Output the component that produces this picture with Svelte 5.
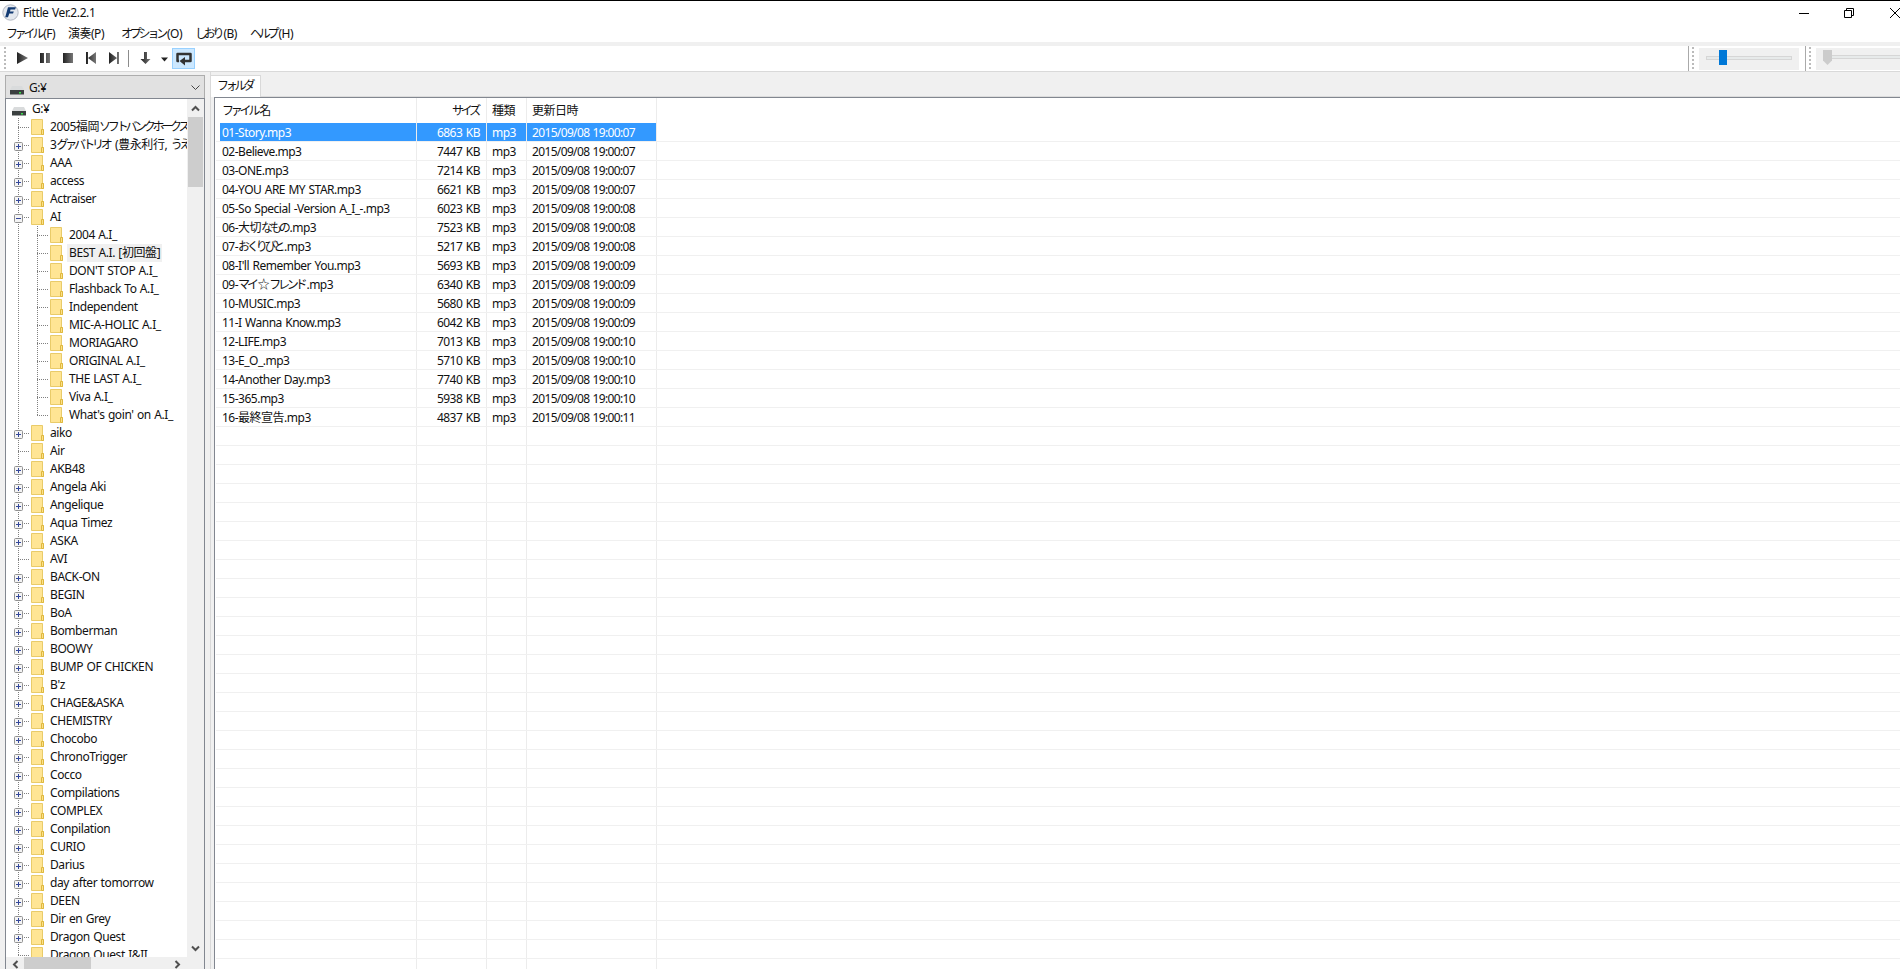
<script>
    /** Main window of the player: menu, transport bar, folder tree, file list. */

    const menus = [
        { kana: 'ファイル', key: '(F)', width: 62 },
        { kana: '演奏', key: '(P)', width: 53 },
        { kana: 'オプション', key: '(O)', width: 74 },
        { kana: 'しおり', key: '(B)', width: 55 },
        { kana: 'ヘルプ', key: '(H)', width: 60 },
    ];

    const albums = [
        '2004 A.I_',
        'BEST A.I. [初回盤]',
        "DON'T STOP A.I_",
        'Flashback To A.I_',
        'Independent',
        'MIC-A-HOLIC A.I_',
        'MORIAGARO',
        'ORIGINAL A.I_',
        'THE LAST A.I_',
        'Viva A.I_',
        "What's goin' on A.I_",
    ];

    const artists = [
        '2005福岡ソフトバンクホークス', '3グァバトリオ (豊永利行, うえだ', 'AAA', 'access', 'Actraiser', 'AI',
        'aiko', 'Air', 'AKB48', 'Angela Aki', 'Angelique', 'Aqua Timez', 'ASKA', 'AVI', 'BACK-ON', 'BEGIN',
        'BoA', 'Bomberman', 'BOOWY', 'BUMP OF CHICKEN', "B'z", 'CHAGE&ASKA', 'CHEMISTRY', 'Chocobo',
        'ChronoTrigger', 'Cocco', 'Compilations', 'COMPLEX', 'Conpilation', 'CURIO', 'Darius',
        'day after tomorrow', 'DEEN', 'Dir en Grey', 'Dragon Quest', 'Dragon Quest I&II',
    ];

    // Folders without subfolders have no expander box
    const leaves = ['2005福岡ソフトバンクホークス', 'Air', 'AVI', 'Dragon Quest I&II'];

    const tree = artists.flatMap((name) => [
        { name, depth: 0, box: leaves.includes(name) ? '' : name === 'AI' ? 'minus' : 'plus' },
        ...(name === 'AI' ? albums.map((a, i) => ({ name: a, depth: 1, box: '', last: i === albums.length - 1 })) : []),
    ]);

    const files = [
        ['01-Story.mp3', 6863, '07'],
        ['02-Believe.mp3', 7447, '07'],
        ['03-ONE.mp3', 7214, '07'],
        ['04-YOU ARE MY STAR.mp3', 6621, '07'],
        ['05-So Special -Version A_I_-.mp3', 6023, '08'],
        ['06-大切なもの.mp3', 7523, '08'],
        ['07-おくりびと.mp3', 5217, '08'],
        ["08-I'll Remember You.mp3", 5693, '09'],
        ['09-マイ☆フレンド.mp3', 6340, '09'],
        ['10-MUSIC.mp3', 5680, '09'],
        ['11-I Wanna Know.mp3', 6042, '09'],
        ['12-LIFE.mp3', 7013, '10'],
        ['13-E_O_.mp3', 5710, '10'],
        ['14-Another Day.mp3', 7740, '10'],
        ['15-365.mp3', 5938, '10'],
        ['16-最終宣告.mp3', 4837, '11'],
    ];
    const blankRows = Array(29);

    let selectedFile = $state(0);
    let selectedFolder = $state('BEST A.I. [初回盤]');

    // Kana runs are set tighter than the rest of the text
    function runs(text) {
        return text.split(/([\u3040-\u30ff]+)/).filter(Boolean);
    }
    const isKana = (run) => /^[\u3040-\u30ff]/.test(run);
</script>

{#snippet label(text)}
    {#each runs(text) as run}<span class:kana={isKana(run)}>{run}</span>{/each}
{/snippet}

{#snippet drive()}
    <svg class="drive" width="14" height="9" viewBox="0 0 14 9" aria-hidden="true">
        <path d="M2 0h10l2 4H0z" fill="#d9dbdc" />
        <path d="M0 4h14v4.500H0z" fill="#3b4040" />
        <path d="M9 6h2v1.500H9z" fill="#39e04a" />
    </svg>
{/snippet}

<div class="window">
    <header class="titlebar">
        <svg width="17" height="17" viewBox="0 0 17 17" aria-hidden="true">
            <circle cx="8.500" cy="8.500" r="7.700" fill="#e4e8ee" stroke="#b3b8c2" />
            <path d="M6 3.200h8l-1 2.300H8.500L8 7.400h3.800L11 9.500H7.300L6 13.300H3.200z" fill="#123a73" />
        </svg>
        <h1>Fittle Ver.2.2.1</h1>
        <div class="controls">
            <svg width="10" height="12" viewBox="0 0 10 12"><path d="M0 6.500h10" /></svg>
            <svg width="11" height="12" viewBox="0 0 11 12"><path d="M.5 3.500h7v7h-7zM2.500 3.500v-2h7v7h-2" /></svg>
            <svg width="10" height="12" viewBox="0 0 10 12"><path d="m0 1 10 10M10 1 0 11" /></svg>
        </div>
    </header>

    <nav class="menubar">
        {#each menus as menu}
            <span style:width="{menu.width}px"><span class:kana={isKana(menu.kana)}>{menu.kana}</span>{menu.key}</span>
        {/each}
    </nav>

    <div class="toolbar">
        <div class="band transport">
            <i class="grip"></i>
            <svg class="tools" width="190" height="22" viewBox="0 0 190 22" aria-hidden="true">
                <defs>
                    <linearGradient id="ink"><stop stop-color="#222" /><stop offset="1" stop-color="#777" /></linearGradient>
                </defs>
                <g fill="url(#ink)" transform="translate(0 -1)">
                    <path d="M12 5v12l11-6z" />
                    <path d="M35 6h4v10h-4zM41 6h4v10h-4z" />
                    <path d="M58 6h10v10H58z" />
                    <path d="M81 5h2v12h-2zM91 5v12l-8-6z" />
                    <path d="M104 5v12l8-6zM112 5h2v12h-2z" />
                    <path d="M139 5h3v7h3.500l-5 5-5-5h3.500z" />
                </g>
                <path d="M123.500 2v17" stroke="#8c8c8c" />
                <path d="M156 9.500h7l-3.500 4z" fill="#222" />
                <rect x="167.500" y=".5" width="22" height="20" fill="#cce8ff" stroke="#99d1ff" />
                <path d="M174 13h-1.500V6h13v7H180" fill="none" stroke="#333" stroke-width="2.500" stroke-linejoin="round" />
                <path d="M180 9v8.500l-5.500-4.500z" fill="#333" />
            </svg>
        </div>
        <div class="band volume">
            <i class="grip"></i>
            <div class="slider"><i class="track"></i><i class="knob"></i></div>
        </div>
        <div class="band seek">
            <i class="grip"></i>
            <div class="slider"><i class="track"></i>
                <svg class="knob" width="9" height="15" viewBox="0 0 9 15"><path d="M0 0h9v10.500L4.500 15 0 10.500z" fill="#ccc" /></svg>
            </div>
        </div>
    </div>

    <main>
        <aside>
            <div class="combo">
                {@render drive()}
                <span>G:¥</span>
                <svg class="chevron" width="9" height="6" viewBox="0 0 9 6"><path d="m.5.5 4 4 4-4" /></svg>
            </div>
            <div class="tree-box">
                <div class="tree">
                    <div class="node root">{@render drive()}<span>G:¥</span></div>
                    {#each tree as node}
                        <div class="node" class:child={node.depth} class:last={node.last}>
                            {#if node.depth}<i class="rail"></i>{/if}
                            <i class="branch">
                                {#if node.box}
                                    <svg width="9" height="9" viewBox="0 0 9 9">
                                        <rect x=".5" y=".5" width="8" height="8" rx="1" fill="#f4f4f4" stroke="#919191" />
                                        <path d={node.box === 'plus' ? 'M2 4.500h5M4.500 2v5' : 'M2 4.500h5'} stroke="#34479a" />
                                    </svg>
                                {/if}
                            </i>
                            <svg class="folder" width="14" height="18" viewBox="0 0 14 18">
                                <path d="M.5 1.500h11v10h1v5H.5z" fill="#ffe594" stroke="#e9cb69" />
                                <path d="M10.500 16.500v-5h2v5z" fill="#fbe08a" stroke="#dfb83e" />
                            </svg>
                            <button class="name" class:selected={node.name === selectedFolder} onclick={() => (selectedFolder = node.name)}>
                                {@render label(node.name)}
                            </button>
                        </div>
                    {/each}
                </div>
                <div class="vscroll">
                    <svg width="9" height="7" viewBox="0 0 9 7"><path d="m1 5.500 3.500-3.500L8 5.500" /></svg>
                    <i></i>
                    <svg class="down" width="9" height="7" viewBox="0 0 9 7"><path d="m1 1.500 3.500 3.500L8 1.500" /></svg>
                </div>
                <div class="hscroll">
                    <svg width="7" height="9" viewBox="0 0 7 9"><path d="M5.500 1 2 4.500 5.500 8" /></svg>
                    <i></i>
                    <svg class="right" width="7" height="9" viewBox="0 0 7 9"><path d="M1.500 1 5 4.500 1.500 8" /></svg>
                </div>
            </div>
        </aside>

        <section>
            <div class="tabs"><span class="tab kana">フォルダ</span></div>
            <div class="list">
                <div class="row head">
                    <span>{@render label('ファイル名')}</span>
                    <span class="size">{@render label('サイズ')}</span>
                    <span>種類</span>
                    <span>更新日時</span>
                </div>
                {#each files as [name, size, sec], i}
                    <div class="row" class:selected={i === selectedFile} onclick={() => (selectedFile = i)} role="none">
                        <span>{@render label(name)}</span>
                        <span class="size">{size} KB</span>
                        <span>mp3</span>
                        <span class="date">2015/09/08 19:00:{sec}</span>
                    </div>
                {/each}
                {#each blankRows as _}
                    <div class="row"><span></span><span></span><span></span><span></span></div>
                {/each}
            </div>
        </section>
    </main>
</div>

<style>
    :global(body) {
        margin: 0;
        overflow: hidden;
    }
    .window {
        box-sizing: border-box;
        width: 1900px;
        height: 969px;
        border-top: 1px solid #000;
        display: flex;
        flex-direction: column;
        overflow: hidden;
        background: #fff;
        color: #111;
        font: 12px/18px 'Noto Sans', 'Noto Sans CJK JP', sans-serif;
        letter-spacing: -0.5px;
        word-spacing: 0.8px;
        white-space: nowrap;
    }
    .kana,
    .name .kana {
        margin-right: 2px;
        letter-spacing: -3.2px;
    }
    .titlebar {
        display: flex;
        align-items: center;
        height: 23px;
        padding-left: 2px;
        gap: 4px;
    }
    h1 {
        margin: 0;
        font-size: 12px;
        font-weight: 400;
        letter-spacing: -0.4px;
    }
    .controls {
        display: flex;
        gap: 35px;
        margin-left: auto;
    }
    .controls svg {
        fill: none;
        stroke: #000;
    }
    .menubar {
        display: flex;
        height: 18px;
        padding-left: 6px;
        line-height: 20px;
    }
    .toolbar {
        display: flex;
        height: 25px;
        border-top: 4px solid #f0f0f0;
        border-bottom: 1px solid #d9d9d9;
    }
    .band {
        display: flex;
        flex: none;
        box-sizing: border-box;
        padding-left: 4px;
    }
    .transport {
        width: 1688px;
    }
    .grip {
        width: 2px;
        margin: 1px 0;
        background: repeating-linear-gradient(#bbb 0 2px, transparent 2px 4px);
    }
    .tools {
        margin: 2px 0 0 -1px;
    }
    .volume,
    .seek {
        border-left: 1px solid #aaa;
        padding-left: 3px;
    }
    .volume {
        width: 117px;
    }
    .seek {
        flex: 1;
    }
    .slider {
        position: relative;
        width: 100px;
        height: 22px;
        margin: 2px 0 0 5px;
        background: #f0f0f0;
        overflow: hidden;
    }
    .seek .slider {
        width: auto;
        flex: 1;
    }
    .track {
        position: absolute;
        left: 7px;
        top: 8px;
        width: 84px;
        height: 2px;
        border: 1px solid #d6d6d6;
        background: #e7eaea;
    }
    .seek .track {
        top: 7px;
        width: 140px;
    }
    .knob {
        position: absolute;
        left: 20px;
        top: 2px;
        width: 8px;
        height: 15px;
        background: #0078d7;
    }
    .seek .knob {
        left: 7px;
        width: 9px;
        background: none;
    }
    main {
        flex: 1;
        min-height: 0;
        display: flex;
        background: #f0f0f0;
    }
    aside {
        width: 200px;
        padding: 3px 0 0 5px;
        display: flex;
        flex-direction: column;
    }
    .combo {
        box-sizing: border-box;
        height: 24px;
        display: flex;
        align-items: center;
        gap: 5px;
        padding: 2px 4px 0 4px;
        border: 1px solid #adadad;
        background: #e1e1e1;
    }
    .combo .drive {
        margin-top: 4px;
    }
    .chevron {
        margin-left: auto;
        fill: none;
        stroke: #444;
    }
    .tree-box {
        flex: 1;
        min-height: 0;
        margin-top: -1px;
        display: grid;
        grid-template: minmax(0, 1fr) 12px / minmax(0, 1fr) 17px;
        border: solid #828790;
        border-width: 1px 1px 0;
        background: #fff;
    }
    .tree {
        overflow: hidden;
        padding-top: 1px;
    }
    .node {
        display: flex;
        height: 18px;
        padding-left: 12px;
        background: linear-gradient(#808080 50%, transparent 50%) 12px 0 / 1px 2px repeat-y;
    }
    .node.root {
        align-items: center;
        padding-left: 6px;
        gap: 6px;
        background: none;
    }
    .root .drive {
        margin-top: 5px;
    }
    .node:last-child {
        background:
            repeating-linear-gradient(#808080 0 1px, transparent 1px 2px) 12px 0 / 1px 9px no-repeat;
    }
    .branch {
        display: flex;
        flex: none;
        align-items: center;
        width: 11px;
        margin-right: 2px;
        background: linear-gradient(90deg, #808080 50%, transparent 50%) 0 9px / 2px 1px repeat-x;
    }
    .branch svg {
        flex: none;
        margin: 2px 0 0 -4px;
    }
    .rail {
        flex: none;
        width: 19px;
    }
    .child .branch {
        background:
            linear-gradient(90deg, #808080 50%, transparent 50%) 0 9px / 2px 1px repeat-x,
            linear-gradient(#808080 50%, transparent 50%) 0 0 / 1px 2px repeat-y;
    }
    .child.last .branch {
        background:
            linear-gradient(90deg, #808080 50%, transparent 50%) 0 9px / 2px 1px repeat-x,
            repeating-linear-gradient(#808080 0 1px, transparent 1px 2px) 0 0 / 1px 9px no-repeat;
    }
    .folder {
        flex: none;
    }
    .name {
        height: 18px;
        margin-left: 3px;
        padding: 0 2px;
        border: 0;
        background: none;
        color: inherit;
        font: inherit;
        letter-spacing: -0.4px;
        word-spacing: 0.6px;
        white-space: nowrap;
    }
    .name.selected {
        background: #f0f0f0;
    }
    .vscroll {
        display: flex;
        flex-direction: column;
        align-items: center;
        padding-top: 6px;
        background: #f0f0f0;
    }
    .vscroll i {
        width: 15px;
        height: 70px;
        margin-top: 5px;
        background: #cdcdcd;
    }
    .vscroll svg,
    .hscroll svg {
        fill: none;
        stroke: #505050;
        stroke-width: 2;
    }
    .down {
        margin: auto 0 5px;
    }
    .hscroll {
        grid-column: 1 / -1;
        display: flex;
        padding: 3px 0 0 6px;
        background: #f0f0f0;
    }
    .hscroll i {
        width: 67px;
        height: 12px;
        margin: -3px 0 0 5px;
        background: #cdcdcd;
    }
    .right {
        margin: 0 23px 0 auto;
    }
    section {
        flex: 1;
        min-width: 0;
        margin-left: 5px;
        display: flex;
        flex-direction: column;
        border-left: 1px solid #d9d9d9;
    }
    .tabs {
        height: 25px;
        padding-top: 3px;
        display: flex;
        box-sizing: border-box;
        border-bottom: 1px solid #dcdcdc;
    }
    .tab {
        box-sizing: border-box;
        width: 50px;
        height: 22px;
        padding-left: 6px;
        border: solid #d9d9d9;
        border-width: 1px 1px 0 0;
        background: #fff;
        line-height: 19px;
    }
    .list {
        flex: 1;
        min-height: 0;
        overflow: hidden;
        margin-left: 3px;
        padding-left: 1px;
        border: solid #828790;
        border-width: 1px 0 0 1px;
        background: #fff;
    }
    .row {
        box-sizing: border-box;
        display: grid;
        grid-template-columns: 197px 70px 40px 130px;
        height: 19px;
        padding-left: 4px;
        border-bottom: 1px solid #f0f0f0;
        line-height: 19px;
    }
    .row > span {
        height: 18px;
        padding: 0 6px 0 2px;
        border-right: 1px solid #ececec;
    }
    .row > span + span {
        padding-left: 5px;
    }
    .row .size {
        text-align: right;
    }
    .row .date {
        letter-spacing: -0.65px;
    }
    .row.head {
        height: 25px;
        line-height: 26px;
        border-bottom: 0;
    }
    .head > span {
        height: 25px;
    }
    .row.selected > span {
        background: #3399ff;
        color: #fff;
    }
</style>
